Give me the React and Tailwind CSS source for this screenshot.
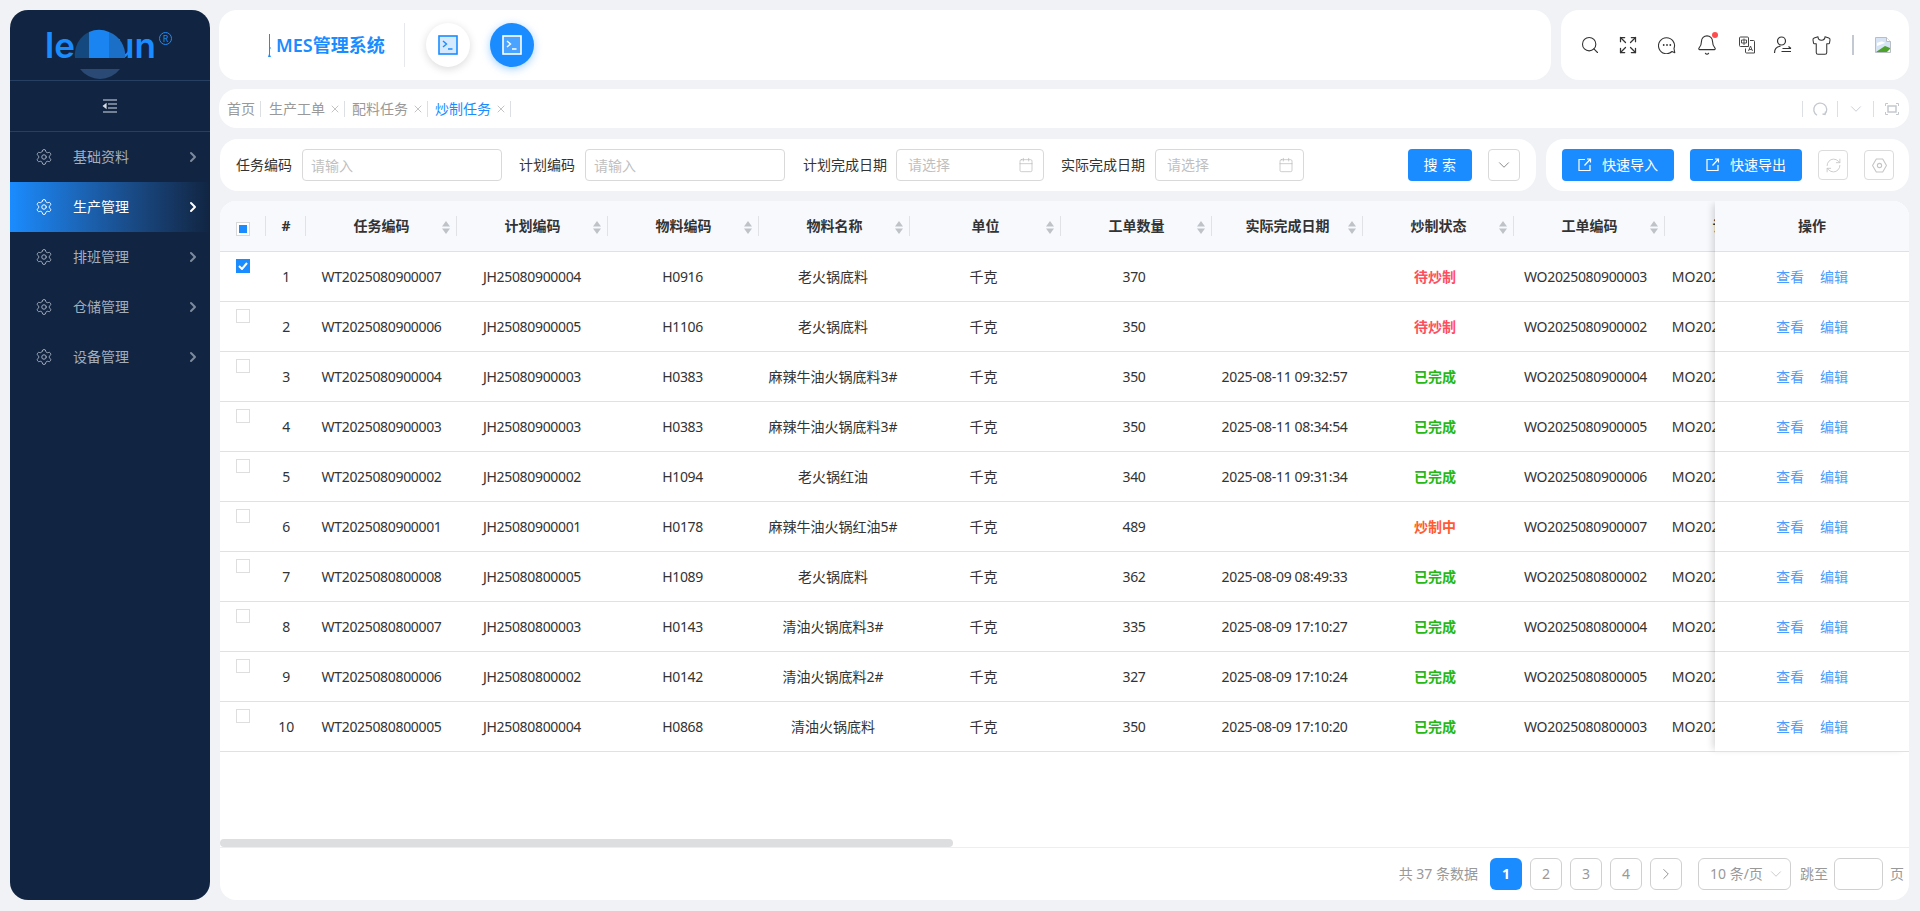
import React from "react";
import { Search, Expand, Bell, Shirt, Settings, ChevronRight, ChevronDown, Calendar, RefreshCw, X } from "lucide-react";

const font = { fontFamily: '"Noto Sans","Noto Sans CJK SC",sans-serif' };

const rows = [
  ["WT2025080900007", "JH25080900004", "H0916", "老火锅底料", "370", "", "待炒制", "WO2025080900003"],
  ["WT2025080900006", "JH25080900005", "H1106", "老火锅底料", "350", "", "待炒制", "WO2025080900002"],
  ["WT2025080900004", "JH25080900003", "H0383", "麻辣牛油火锅底料3#", "350", "2025-08-11 09:32:57", "已完成", "WO2025080900004"],
  ["WT2025080900003", "JH25080900003", "H0383", "麻辣牛油火锅底料3#", "350", "2025-08-11 08:34:54", "已完成", "WO2025080900005"],
  ["WT2025080900002", "JH25080900002", "H1094", "老火锅红油", "340", "2025-08-11 09:31:34", "已完成", "WO2025080900006"],
  ["WT2025080900001", "JH25080900001", "H0178", "麻辣牛油火锅红油5#", "489", "", "炒制中", "WO2025080900007"],
  ["WT2025080800008", "JH25080800005", "H1089", "老火锅底料", "362", "2025-08-09 08:49:33", "已完成", "WO2025080800002"],
  ["WT2025080800007", "JH25080800003", "H0143", "清油火锅底料3#", "335", "2025-08-09 17:10:27", "已完成", "WO2025080800004"],
  ["WT2025080800006", "JH25080800002", "H0142", "清油火锅底料2#", "327", "2025-08-09 17:10:24", "已完成", "WO2025080800005"],
  ["WT2025080800005", "JH25080800004", "H0868", "清油火锅底料", "350", "2025-08-09 17:10:20", "已完成", "WO2025080800003"],
];

const headers = ["任务编码", "计划编码", "物料编码", "物料名称", "单位", "工单数量", "实际完成日期", "炒制状态", "工单编码", "订单编码"];

const statusColor = {
  待炒制: "text-[#ff4d5e]",
  已完成: "text-[#25b814]",
  炒制中: "text-[#ff5a30]",
};

const menus = ["基础资料", "生产管理", "排班管理", "仓储管理", "设备管理"];

function Logo() {
  return (
    <div className="relative h-[71px] border-b border-[#263f63] shrink-0">
      <span className="absolute left-[35px] top-[9px] text-[35px] leading-[52px] font-semibold text-[#1a8cff]" style={{ fontFamily: "Inter, sans-serif" }}>le</span>
      <span className="absolute left-[103px] top-[9px] text-[35px] leading-[52px] font-semibold text-[#1a8cff]" style={{ fontFamily: "Inter, sans-serif" }}>un</span>
      <svg className="absolute left-[64px] top-[18px]" width="52" height="52" viewBox="0 0 52 52">
        <path d="M1 30 A25 25 0 0 1 15 4 L15 30Z" fill="#14497f" />
        <path d="M15 4 A25 25 0 0 1 35 4 L35 30 L15 30Z" fill="#1a85f0" />
        <path d="M35 4 A25 25 0 0 1 51 30 L35 30Z" fill="#1c6fc6" />
        <rect x="0" y="30" width="52" height="22" fill="#112542" />
        <path d="M6 41 L46 41 A25 25 0 0 1 6 41Z" fill="#2a4a75" />
      </svg>
      <span className="absolute left-[149px] top-[22px] w-[13px] h-[13px] rounded-full border border-[#1a8cff] text-[#1a8cff] text-[9px] leading-[11px] text-center">R</span>
    </div>
  );
}

function CollapseIcon() {
  return (
    <svg width="16" height="14" viewBox="0 0 16 14" fill="none" stroke="#d7dce4" strokeWidth="1.2">
      <path d="M1 1h14M6 5h9M6 9h9M1 13h14" />
      <path d="M4 5L1.5 7L4 9Z" fill="#d7dce4" />
    </svg>
  );
}

function Sidebar() {
  return (
    <div className="w-[200px] mr-[9px] shrink-0 bg-[#112542] rounded-[18px] overflow-hidden flex flex-col">
      <Logo />
      <div className="h-[51px] flex items-center justify-center border-b border-[#263f63] shrink-0">
        <CollapseIcon />
      </div>
      {menus.map((m, i) => (
        <div
          key={m}
          className={`h-[50px] flex items-center pl-[25px] pr-[9px] text-sm ${i === 1 ? "text-white bg-gradient-to-r from-[#1a8cff] to-[#112542]" : "text-[#a3aebd]"}`}
        >
          <Settings size={18} strokeWidth={1.3} />
          <span className="ml-[20px] flex-1">{m}</span>
          <ChevronRight size={16} strokeWidth={3} className={i === 1 ? "text-white" : "text-[#7d8a9e]"} />
        </div>
      ))}
    </div>
  );
}

function TermIcon({ active }) {
  return (
    <svg width="20" height="20" viewBox="0 0 20 20" fill="none">
      <rect x="1" y="1" width="18" height="18" fill={active ? "#4aa3ff" : "#d5e9ff"} stroke={active ? "#fff" : "#1a8cff"} strokeWidth="1.6" />
      <path d="M5 6l3.5 3L5 12M10 14h4.5" stroke={active ? "#fff" : "#1a8cff"} strokeWidth="1.4" />
    </svg>
  );
}

function ChatIcon() {
  return (
    <svg width="18" height="18" viewBox="0 0 18 18" fill="none" stroke="#333" strokeWidth="1.1">
      <path d="M14 15.5A8 8 0 1 1 16 12.5L16.8 16.8Z" strokeLinejoin="round" />
      <circle cx="5.7" cy="9" r="0.9" fill="#333" stroke="none" />
      <circle cx="9" cy="9" r="0.9" fill="#333" stroke="none" />
      <circle cx="12.3" cy="9" r="0.9" fill="#333" stroke="none" />
    </svg>
  );
}

function TranslateIcon() {
  return (
    <svg width="18" height="18" viewBox="0 0 18 18" fill="none" stroke="#444" strokeWidth="1">
      <path d="M2.5 1h7a1 1 0 0 1 1 1v8.5h-8a1 1 0 0 1-1-1V2a1 1 0 0 1 1-1z" />
      <path d="M12 4.5h3.5a1 1 0 0 1 1 1V17h-8a1 1 0 0 1-1-1V12.5" />
      <path d="M3.5 4h5v3h-5zM6 2.5V9" strokeWidth="0.9" />
      <path d="M10.5 15l2-5 2 5M11.2 13.5h2.6" strokeWidth="0.9" />
    </svg>
  );
}

function UserLinesIcon() {
  return (
    <svg width="20" height="20" viewBox="0 0 20 20" fill="none" stroke="#333" strokeWidth="1.2">
      <circle cx="8.5" cy="6" r="4" />
      <path d="M1.5 18c0-4 2.5-6.5 6-6.8" />
      <path d="M9.5 13.5h8.5M8.5 16.5h9.5M15.5 11.5l2.5 2" />
    </svg>
  );
}

function BrokenImage() {
  return (
    <svg width="16" height="16" viewBox="0 0 16 16">
      <path d="M0.5 0.5h11l4 4v11h-15z" fill="#d6e4f5" stroke="#b9bec6" />
      <path d="M11.5 0.5v4h4" fill="#fff" stroke="#b9bec6" />
      <path d="M2 6c3-2 6-2 8 0l-8 3z" fill="#fff" />
      <path d="M1 15l9-6 5 2v4z" fill="#4ca22a" />
      <path d="M12 15l3-3v3z" fill="#fff" />
    </svg>
  );
}

const headIcons = [
  { key: "search", ml: "ml-0", el: <Search size={20} strokeWidth={1.3} /> },
  { key: "expand", ml: "ml-[18px]", el: <Expand size={20} strokeWidth={1.5} /> },
  { key: "chat", ml: "ml-[19px]", el: <ChatIcon /> },
  { key: "bell", ml: "ml-[20px]", el: <Bell size={22} strokeWidth={1.2} className="shrink-0" /> },
  { key: "lang", ml: "ml-[20px]", el: <TranslateIcon /> },
  { key: "user", ml: "ml-[16px]", el: <UserLinesIcon /> },
  { key: "shirt", ml: "ml-[18px]", el: <Shirt size={21} strokeWidth={1.2} className="shrink-0" /> },
];

function Header() {
  return (
    <div className="flex h-[70px] shrink-0 gap-[10px]">
      <div className="flex-1 bg-white rounded-[18px] flex items-center pl-[49px]">
        <svg width="8" height="24" viewBox="0 0 8 24" fill="#1a8cff" className="mt-[2px] shrink-0">
          <path d="M1 0h1v13l1 1-1 1v6l1 2H0l1-3z" />
        </svg>
        <span className="text-[18px] font-semibold text-[#1a8cff] w-[128px] whitespace-nowrap">MES管理系统</span>
        <span className="w-px h-[44px] bg-[#e6e8eb]"></span>
        <div className="ml-[21px] w-[44px] h-[44px] rounded-full bg-white shadow-[0_2px_8px_rgba(0,0,0,0.15)] flex items-center justify-center">
          <TermIcon />
        </div>
        <div className="ml-[20px] w-[44px] h-[44px] rounded-full bg-[#1a8cff] shadow-[0_2px_8px_rgba(26,140,255,0.4)] flex items-center justify-center">
          <TermIcon active />
        </div>
      </div>
      <div className="w-[348px] bg-white rounded-[18px] flex items-center pl-[19px] text-[#333]">
        {headIcons.map((ic) => (
          <div key={ic.key} className={`relative w-[20px] h-[20px] flex items-center justify-center ${ic.ml}`}>
            {ic.el}
            {ic.key === "bell" && <span className="absolute -top-[3px] left-[15px] w-[6px] h-[6px] rounded-full bg-[#ff4d4f]"></span>}
          </div>
        ))}
        <span className="ml-[21px] w-[2px] h-[20px] bg-[#c3c8d1]"></span>
        <span className="ml-[21px] flex"><BrokenImage /></span>
      </div>
    </div>
  );
}

const tabs = ["生产工单", "配料任务", "炒制任务"];

function TabSep() {
  return <span className="w-px h-[16px] bg-[#dcdfe4]"></span>;
}

function Tabs() {
  return (
    <div className="mt-[9px] h-[39px] shrink-0 bg-white rounded-[18px] flex items-center pl-[8px] pr-[10px] text-sm text-[#999]">
      <span>首页</span>
      <span className="ml-[5px] mr-[8px] flex"><TabSep /></span>
      {tabs.map((t, i) => (
        <React.Fragment key={t}>
          <span className={i === 2 ? "text-[#1a8cff]" : ""}>{t}</span>
          <X size={12} strokeWidth={1} className="ml-[4px] mr-[3px] text-[#888]" />
          <span className="mr-[7px] flex"><TabSep /></span>
        </React.Fragment>
      ))}
      <div className="ml-auto flex items-center text-[#c4c8ce]">
        <TabSep />
        <svg className="mx-[9px]" width="16" height="16" viewBox="0 0 16 16" fill="none" stroke="#c4c8ce" strokeWidth="1.3">
          <path d="M5 14.2A6.5 6.5 0 1 1 13 13" />
          <path d="M13.5 10.5L13 13.5l-2.5-.5" />
        </svg>
        <TabSep />
        <ChevronDown size={18} strokeWidth={1.2} className="mx-[8.5px]" />
        <TabSep />
        <svg className="ml-[11px]" width="14" height="12" viewBox="0 0 14 12" fill="none" stroke="#c4c8ce">
          <path d="M0.5 3V0.5H3M11 0.5h2.5V3M13.5 9v2.5H11M3 11.5H0.5V9" />
          <rect x="3" y="3" width="8" height="6" strokeWidth="1.5" />
        </svg>
      </div>
    </div>
  );
}

function TextInput({ w }) {
  return (
    <input
      placeholder="请输入"
      className={`${w} h-[32px] border border-[#d9d9d9] rounded-[4px] px-[8px] text-sm outline-none placeholder:text-[#bfbfbf]`}
    />
  );
}

function DateInput({ w }) {
  return (
    <div className={`${w} h-[32px] border border-[#d9d9d9] rounded-[4px] pl-[11px] pr-[9px] flex items-center justify-between text-sm text-[#bfbfbf]`}>
      <span>请选择</span>
      <Calendar size={16} strokeWidth={1} className="text-[#b5b5b5]" />
    </div>
  );
}

function ShareIcon() {
  return (
    <svg width="14" height="14" viewBox="0 0 14 14" fill="none" stroke="#fff" strokeWidth="1.2">
      <path d="M7 1.5H1v11h11V7" />
      <path d="M6.5 7.5L12 1.5M9 1h3.5v3.5" />
    </svg>
  );
}

function Filters() {
  return (
    <div className="mt-[11px] ml-px h-[52px] shrink-0 flex gap-[10px] text-sm text-[#333]">
      <div className="flex-1 bg-white rounded-[18px] flex items-center pl-[16px] pr-[16px]">
        <span className="w-[56px] mr-[10px] shrink-0">任务编码</span>
        <TextInput w="w-[200px]" />
        <span className="w-[56px] ml-[17px] mr-[10px] shrink-0">计划编码</span>
        <TextInput w="w-[200px]" />
        <span className="ml-[18px] mr-[9px] shrink-0">计划完成日期</span>
        <DateInput w="w-[148px]" />
        <span className="ml-[17px] mr-[10px] shrink-0">实际完成日期</span>
        <DateInput w="w-[149px]" />
        <button className="ml-auto w-[64px] h-[32px] rounded-[4px] bg-[#1a8cff] text-white tracking-[0.5px]">搜 索</button>
        <button className="ml-[16px] w-[32px] h-[32px] rounded-[4px] border border-[#d9d9d9] flex items-center justify-center text-[#888]">
          <ChevronDown size={18} strokeWidth={1.3} />
        </button>
      </div>
      <div className="w-[363px] bg-white rounded-[18px] flex items-center pl-[16px] gap-[16px]">
        {["快速导入", "快速导出"].map((t) => (
          <button key={t} className="w-[112px] h-[32px] rounded-[4px] bg-[#1a8cff] text-white flex items-center justify-center gap-[10px]">
            <ShareIcon />
            {t}
          </button>
        ))}
        <button className="w-[30px] h-[30px] rounded-[4px] border border-[#dcdcdc] flex items-center justify-center text-[#c5c5c5]">
          <RefreshCw size={17} strokeWidth={1.2} />
        </button>
        <button className="w-[30px] h-[30px] rounded-[4px] border border-[#dcdcdc] flex items-center justify-center">
          <svg width="15" height="15" viewBox="0 0 14 14" fill="none" stroke="#c5c5c5" strokeWidth="1">
            <path d="M4 1h6l3.5 6L10 13H4L0.5 7z" strokeLinejoin="round" />
            <circle cx="7" cy="7" r="2" />
          </svg>
        </button>
      </div>
    </div>
  );
}

function Sorter() {
  return (
    <svg className="absolute right-[7px] top-[20px]" width="8" height="13" viewBox="0 0 8 13" fill="#bfc3c8">
      <path d="M4 0l4 5.5H0zM0 7.5h8L4 13z" />
    </svg>
  );
}

function Cell({ children, latin }) {
  return <div className={`w-[150.5px] flex items-center justify-center whitespace-nowrap ${latin ? "tracking-[-0.33px]" : ""}`}>{children}</div>;
}

function Table() {
  return (
    <div className="mt-[10px] ml-px flex-1 min-h-0 bg-white rounded-[16px] overflow-hidden flex flex-col text-sm text-[#333]">
      <div className="flex-1 min-h-0 flex flex-col">
        <div className="flex items-start">
          <div className="flex-1 min-w-0 overflow-hidden">
            <div className="flex w-max h-[51px] bg-[#f7f9fd] border-b border-[#dfe1e5] font-bold">
              <div className="w-[46px] flex items-center pl-[16px] relative">
                <span className="w-[14px] h-[14px] border border-[#d9d9d9] bg-white flex items-center justify-center mt-[6px]">
                  <span className="w-[8px] h-[8px] bg-[#1a8cff]"></span>
                </span>
                <span className="absolute right-0 top-[15px] w-px h-[20px] bg-[#e0e2e6]"></span>
              </div>
              <div className="w-[40px] flex items-center justify-center relative">
                #
                <span className="absolute right-0 top-[15px] w-px h-[20px] bg-[#e0e2e6]"></span>
              </div>
              {headers.map((h) => (
                <div key={h} className="w-[151px] relative flex items-center justify-center">
                  {h}
                  <Sorter />
                  <span className="absolute right-0 top-[15px] w-px h-[20px] bg-[#e0e2e6]"></span>
                </div>
              ))}
            </div>
            {rows.map((r, i) => (
              <div key={r[0]} className="flex w-max h-[50px] border-b border-[#dfe1e5]">
                <div className="w-[46px] pl-[16px] pt-[7px]">
                  {i === 0 ? (
                    <span className="w-[14px] h-[14px] bg-[#1a8cff] flex items-center justify-center">
                      <svg width="10" height="8" viewBox="0 0 10 8" fill="none" stroke="#fff" strokeWidth="2">
                        <path d="M1 4l3 3 5-6" />
                      </svg>
                    </span>
                  ) : (
                    <span className="block w-[14px] h-[14px] border border-[#dedede] bg-white"></span>
                  )}
                </div>
                <div className="w-[40.3px] flex items-center justify-center">{i + 1}</div>
                <Cell latin>{r[0]}</Cell>
                <Cell latin>{r[1]}</Cell>
                <Cell latin>{r[2]}</Cell>
                <Cell>{r[3]}</Cell>
                <Cell>千克</Cell>
                <Cell latin>{r[4]}</Cell>
                <Cell latin>{r[5]}</Cell>
                <Cell>
                  <span className={`font-bold ${statusColor[r[6]]}`}>{r[6]}</span>
                </Cell>
                <Cell latin>{r[7]}</Cell>
                {/* only the start of this column shows before the fixed one */}
                <div className="w-[60px] pl-[11px] flex items-center whitespace-nowrap">MO2025</div>
              </div>
            ))}
          </div>
          <div className="relative w-[194px] shrink-0 bg-white shadow-[-5px_0_7px_-3px_rgba(0,0,0,0.16)]">
            <div className="h-[51px] bg-[#f7f9fd] border-b border-[#dfe1e5] font-bold flex items-center justify-center">操作</div>
            {rows.map((r) => (
              <div key={r[0]} className="h-[50px] border-b border-[#dfe1e5] flex items-center justify-center gap-[16px] text-[#4a9dff]">
                <span>查看</span>
                <span>编辑</span>
              </div>
            ))}
          </div>
        </div>
        <div className="mt-auto w-[733px] h-[8px] rounded-[4px] bg-[#dddee0] shrink-0"></div>
      </div>
      <Pager />
    </div>
  );
}

function Pager() {
  const box = "w-[32px] h-[32px] rounded-[6px] border border-[#d0d0d0] flex items-center justify-center text-[#999]";
  return (
    <div className="h-[53px] shrink-0 border-t border-[#eceef1] flex items-center justify-end pr-[5px] text-sm text-[#999]">
      <span className="mr-[12px]">共 37 条数据</span>
      <span className="w-[32px] h-[32px] rounded-[6px] bg-[#1a8cff] text-white font-bold flex items-center justify-center mr-[8px]">1</span>
      <div className="flex gap-[8px]">
        <span className={box}>2</span>
        <span className={box}>3</span>
        <span className={box}>4</span>
        <span className={box}>
          <ChevronRight size={18} strokeWidth={1.2} className="text-[#888]" />
        </span>
      </div>
      <div className="ml-[16px] w-[93px] h-[32px] rounded-[6px] border border-[#d0d0d0] flex items-center pl-[11px] gap-[4px]">
        <span>10 条/页</span>
        <ChevronDown size={18} strokeWidth={1} className="text-[#bbb]" />
      </div>
      <span className="ml-[9px] mr-[6px]">跳至</span>
      <span className="w-[49px] h-[32px] rounded-[6px] border border-[#d0d0d0]"></span>
      <span className="ml-[7px]">页</span>
    </div>
  );
}

export default function App() {
  return (
    <div className="w-full h-[911px] bg-[#f0f2f6] flex pl-[10px] pr-[11px] pt-[10px] pb-[11px] overflow-hidden" style={font}>
      <Sidebar />
      <div className="flex-1 min-w-0 flex flex-col">
        <Header />
        <Tabs />
        <Filters />
        <Table />
      </div>
    </div>
  );
}
